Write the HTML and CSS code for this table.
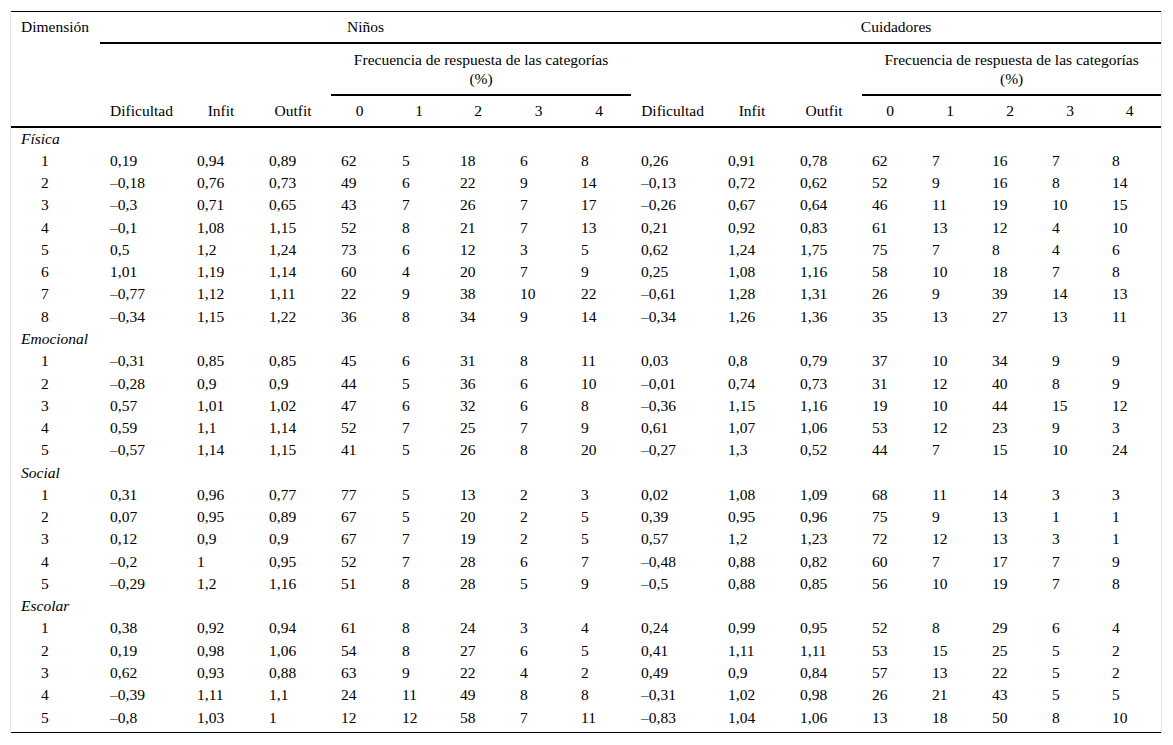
FILE: index.html
```html
<!DOCTYPE html>
<html lang="es">
<head>
<meta charset="utf-8">
<title>Tabla</title>
<link rel="stylesheet" href="styles.css">
</head>
<body>
<div class="frame">
<table class="data">
<colgroup>
<col class="c-dim">
<col class="c-dif"><col class="c-inf"><col class="c-out"><col class="c-f0"><col class="c-f1"><col class="c-f2"><col class="c-f3"><col class="c-f4">
<col class="c-dif"><col class="c-inf"><col class="c-out"><col class="c-g0"><col class="c-g1"><col class="c-g2"><col class="c-g3"><col class="c-g4">
</colgroup>
<thead>
<tr class="h1">
<th rowspan="3" class="dim">Dimensión</th>
<th colspan="8" class="grp">Niños</th>
<th colspan="8" class="grp">Cuidadores</th>
</tr>
<tr class="h2">
<th colspan="3"></th>
<th colspan="5" class="freq">Frecuencia de respuesta de las categorías<br>(%)</th>
<th colspan="3"></th>
<th colspan="5" class="freq">Frecuencia de respuesta de las categorías<br>(%)</th>
</tr>
<tr class="h3">
<th>Dificultad</th><th>Infit</th><th>Outfit</th><th>0</th><th>1</th><th>2</th><th>3</th><th>4</th>
<th>Dificultad</th><th>Infit</th><th>Outfit</th><th>0</th><th>1</th><th>2</th><th>3</th><th>4</th>
</tr>
</thead>
<tbody>
<tr class="cat"><td colspan="17">Física</td></tr>
<tr><td class="item">1</td><td>0,19</td><td>0,94</td><td>0,89</td><td>62</td><td>5</td><td>18</td><td>6</td><td>8</td><td>0,26</td><td>0,91</td><td>0,78</td><td>62</td><td>7</td><td>16</td><td>7</td><td>8</td></tr>
<tr><td class="item">2</td><td>–0,18</td><td>0,76</td><td>0,73</td><td>49</td><td>6</td><td>22</td><td>9</td><td>14</td><td>–0,13</td><td>0,72</td><td>0,62</td><td>52</td><td>9</td><td>16</td><td>8</td><td>14</td></tr>
<tr><td class="item">3</td><td>–0,3</td><td>0,71</td><td>0,65</td><td>43</td><td>7</td><td>26</td><td>7</td><td>17</td><td>–0,26</td><td>0,67</td><td>0,64</td><td>46</td><td>11</td><td>19</td><td>10</td><td>15</td></tr>
<tr><td class="item">4</td><td>–0,1</td><td>1,08</td><td>1,15</td><td>52</td><td>8</td><td>21</td><td>7</td><td>13</td><td>0,21</td><td>0,92</td><td>0,83</td><td>61</td><td>13</td><td>12</td><td>4</td><td>10</td></tr>
<tr><td class="item">5</td><td>0,5</td><td>1,2</td><td>1,24</td><td>73</td><td>6</td><td>12</td><td>3</td><td>5</td><td>0,62</td><td>1,24</td><td>1,75</td><td>75</td><td>7</td><td>8</td><td>4</td><td>6</td></tr>
<tr><td class="item">6</td><td>1,01</td><td>1,19</td><td>1,14</td><td>60</td><td>4</td><td>20</td><td>7</td><td>9</td><td>0,25</td><td>1,08</td><td>1,16</td><td>58</td><td>10</td><td>18</td><td>7</td><td>8</td></tr>
<tr><td class="item">7</td><td>–0,77</td><td>1,12</td><td>1,11</td><td>22</td><td>9</td><td>38</td><td>10</td><td>22</td><td>–0,61</td><td>1,28</td><td>1,31</td><td>26</td><td>9</td><td>39</td><td>14</td><td>13</td></tr>
<tr><td class="item">8</td><td>–0,34</td><td>1,15</td><td>1,22</td><td>36</td><td>8</td><td>34</td><td>9</td><td>14</td><td>–0,34</td><td>1,26</td><td>1,36</td><td>35</td><td>13</td><td>27</td><td>13</td><td>11</td></tr>
<tr class="cat"><td colspan="17">Emocional</td></tr>
<tr><td class="item">1</td><td>–0,31</td><td>0,85</td><td>0,85</td><td>45</td><td>6</td><td>31</td><td>8</td><td>11</td><td>0,03</td><td>0,8</td><td>0,79</td><td>37</td><td>10</td><td>34</td><td>9</td><td>9</td></tr>
<tr><td class="item">2</td><td>–0,28</td><td>0,9</td><td>0,9</td><td>44</td><td>5</td><td>36</td><td>6</td><td>10</td><td>–0,01</td><td>0,74</td><td>0,73</td><td>31</td><td>12</td><td>40</td><td>8</td><td>9</td></tr>
<tr><td class="item">3</td><td>0,57</td><td>1,01</td><td>1,02</td><td>47</td><td>6</td><td>32</td><td>6</td><td>8</td><td>–0,36</td><td>1,15</td><td>1,16</td><td>19</td><td>10</td><td>44</td><td>15</td><td>12</td></tr>
<tr><td class="item">4</td><td>0,59</td><td>1,1</td><td>1,14</td><td>52</td><td>7</td><td>25</td><td>7</td><td>9</td><td>0,61</td><td>1,07</td><td>1,06</td><td>53</td><td>12</td><td>23</td><td>9</td><td>3</td></tr>
<tr><td class="item">5</td><td>–0,57</td><td>1,14</td><td>1,15</td><td>41</td><td>5</td><td>26</td><td>8</td><td>20</td><td>–0,27</td><td>1,3</td><td>0,52</td><td>44</td><td>7</td><td>15</td><td>10</td><td>24</td></tr>
<tr class="cat"><td colspan="17">Social</td></tr>
<tr><td class="item">1</td><td>0,31</td><td>0,96</td><td>0,77</td><td>77</td><td>5</td><td>13</td><td>2</td><td>3</td><td>0,02</td><td>1,08</td><td>1,09</td><td>68</td><td>11</td><td>14</td><td>3</td><td>3</td></tr>
<tr><td class="item">2</td><td>0,07</td><td>0,95</td><td>0,89</td><td>67</td><td>5</td><td>20</td><td>2</td><td>5</td><td>0,39</td><td>0,95</td><td>0,96</td><td>75</td><td>9</td><td>13</td><td>1</td><td>1</td></tr>
<tr><td class="item">3</td><td>0,12</td><td>0,9</td><td>0,9</td><td>67</td><td>7</td><td>19</td><td>2</td><td>5</td><td>0,57</td><td>1,2</td><td>1,23</td><td>72</td><td>12</td><td>13</td><td>3</td><td>1</td></tr>
<tr><td class="item">4</td><td>–0,2</td><td>1</td><td>0,95</td><td>52</td><td>7</td><td>28</td><td>6</td><td>7</td><td>–0,48</td><td>0,88</td><td>0,82</td><td>60</td><td>7</td><td>17</td><td>7</td><td>9</td></tr>
<tr><td class="item">5</td><td>–0,29</td><td>1,2</td><td>1,16</td><td>51</td><td>8</td><td>28</td><td>5</td><td>9</td><td>–0,5</td><td>0,88</td><td>0,85</td><td>56</td><td>10</td><td>19</td><td>7</td><td>8</td></tr>
<tr class="cat"><td colspan="17">Escolar</td></tr>
<tr><td class="item">1</td><td>0,38</td><td>0,92</td><td>0,94</td><td>61</td><td>8</td><td>24</td><td>3</td><td>4</td><td>0,24</td><td>0,99</td><td>0,95</td><td>52</td><td>8</td><td>29</td><td>6</td><td>4</td></tr>
<tr><td class="item">2</td><td>0,19</td><td>0,98</td><td>1,06</td><td>54</td><td>8</td><td>27</td><td>6</td><td>5</td><td>0,41</td><td>1,11</td><td>1,11</td><td>53</td><td>15</td><td>25</td><td>5</td><td>2</td></tr>
<tr><td class="item">3</td><td>0,62</td><td>0,93</td><td>0,88</td><td>63</td><td>9</td><td>22</td><td>4</td><td>2</td><td>0,49</td><td>0,9</td><td>0,84</td><td>57</td><td>13</td><td>22</td><td>5</td><td>2</td></tr>
<tr><td class="item">4</td><td>–0,39</td><td>1,11</td><td>1,1</td><td>24</td><td>11</td><td>49</td><td>8</td><td>8</td><td>–0,31</td><td>1,02</td><td>0,98</td><td>26</td><td>21</td><td>43</td><td>5</td><td>5</td></tr>
<tr class="last"><td class="item">5</td><td>–0,8</td><td>1,03</td><td>1</td><td>12</td><td>12</td><td>58</td><td>7</td><td>11</td><td>–0,83</td><td>1,04</td><td>1,06</td><td>13</td><td>18</td><td>50</td><td>8</td><td>10</td></tr>
</tbody>
</table>
</div>
</body>
</html>
```
FILE: styles.css
```css
html, body {
  margin: 0;
  padding: 0;
  background: #fff;
}

.frame {
  margin: 11px 0 0 10px;
  width: 1150px;
  border-left: 1px solid #e4e4e4;
  border-right: 1px solid #e4e4e4;
}

.data {
  width: 1150px;
  table-layout: fixed;
  border-collapse: separate;
  border-spacing: 0;
  border-top: 1px solid #000;
  border-bottom: 1px solid #000;
  font-family: "Liberation Serif", "Times New Roman", serif;
  font-size: 15.5px;
  color: #000;
}

.c-dim { width: 89px; }
.c-dif { width: 87px; }
.c-inf { width: 72px; }
.c-out { width: 72px; }
.c-f0 { width: 61px; }
.c-f1 { width: 58px; }
.c-f2 { width: 60px; }
.c-f3 { width: 61px; }
.c-f4 { width: 60px; }
.c-g0 { width: 60px; }
.c-g1 { width: 60px; }
.c-g2 { width: 60px; }
.c-g3 { width: 60px; }
.c-g4 { width: 59px; }

th {
  font-weight: normal;
  padding: 0;
}

.h1 th {
  height: 30px;
  vertical-align: middle;
  text-align: center;
  line-height: 18px;
}

.h1 th.grp {
  border-bottom: 2px solid #000;
}

.h1 th.dim {
  vertical-align: top;
  text-align: left;
  padding: 6px 0 0 10px;
  border-bottom: 2px solid #000;
}

.h2 th {
  height: 50px;
  vertical-align: middle;
  line-height: 19px;
  text-align: center;
}

.h2 th.freq {
  border-bottom: 2px solid #000;
  padding: 0;
}

.h3 th {
  height: 30px;
  vertical-align: middle;
  text-align: center;
  line-height: 18px;
  padding: 0 14px 0 10px;
  border-bottom: 2px solid #000;
}

td {
  padding: 0 0 1px 10px;
  height: 21.27px;
  line-height: 18px;
  vertical-align: middle;
  text-align: left;
  white-space: nowrap;
}

td.item {
  padding-left: 30px;
}

.cat td {
  font-style: italic;
}

.last td {
  padding-bottom: 4px;
}
```
